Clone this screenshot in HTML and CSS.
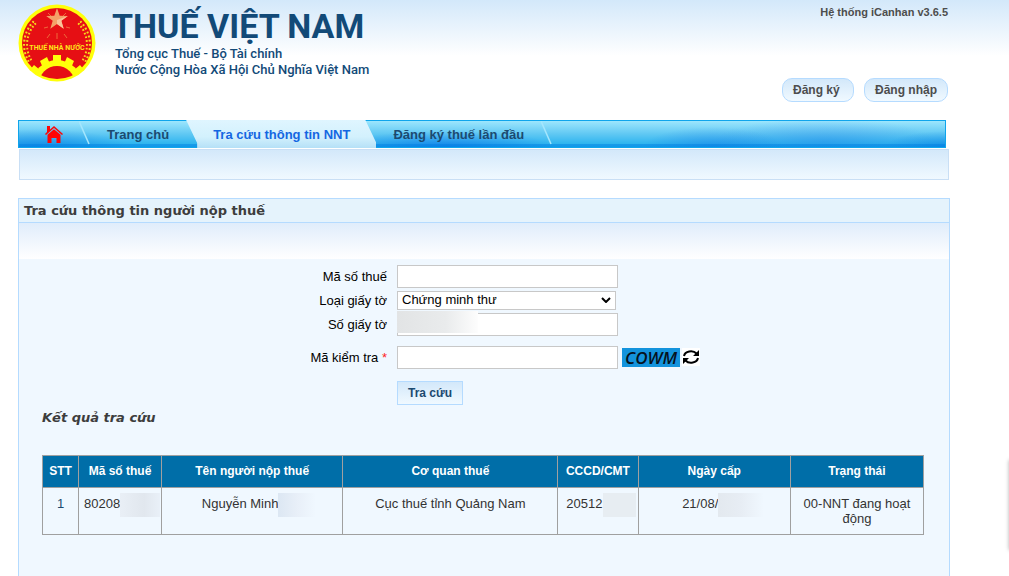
FILE: index.html
```html
<!DOCTYPE html>
<html lang="vi">
<head>
<meta charset="utf-8">
<title>Thuế Việt Nam</title>
<link rel="stylesheet" href="styles.css">
</head>
<body>
<header class="header">
  <a class="brand" href="#">
    <svg class="emblem" viewBox="0 0 78 78" aria-label="Thuế Nhà Nước">
      <circle cx="39" cy="39" r="38.5" fill="#ffff0a"/>
      <circle cx="39" cy="39" r="35" fill="#e60f14"/>
      <clipPath id="disc"><circle cx="39" cy="39" r="36"/></clipPath>
      <g clip-path="url(#disc)">
        <circle cx="39" cy="81" r="25" fill="#ffff0a"/>
        <path d="M35 51h8v8h-8zM22 57l7-4 3 7-7 4zM56 57l-7-4-3 7 7 4zM11 67l5-6 6 5-5 6zM67 67l-5-6-6 5 5 6z" fill="#ffff0a"/>
        <circle cx="39" cy="80" r="18" fill="#e60f14"/>
      </g>
      <path d="M12 57A32 32 0 0 1 17 18M66 57A32 32 0 0 0 61 18" fill="none" stroke="#f6dc1c" stroke-width="5" stroke-dasharray="1.800 2.200"/>
      <path d="M12 57A32 32 0 0 1 17 18M66 57A32 32 0 0 0 61 18" fill="none" stroke="#e60f14" stroke-width="1"/>
      <path d="M26 24l4-1M52 24l-4-1M32 30l-3 4M46 30l3 4M39 29v6M30 9l3 3M48 9l-3 3" stroke="#ee6a3a" stroke-width="1"/>
      <path d="M39 4l2.700 7.800 8.100.1-6.500 4.900 2.400 7.900L39 20l-6.700 4.700 2.400-7.900-6.500-4.900 8.100-.1z" fill="#f4a168"/>
      <path d="M39 4v12l4.300.8 2.400 7.900L39 20zM39 16l10.800-4.100-6.500 4.900z" fill="#fac39a"/>
      <text class="emblem-text" x="39" y="46" text-anchor="middle">THUẾ NHÀ NƯỚC</text>
    </svg>
    <span class="brand-text">
      <span class="brand-name">THUẾ VIỆT NAM</span>
      <span class="brand-line">Tổng cục Thuế - Bộ Tài chính</span>
      <span class="brand-line">Nước Cộng Hòa Xã Hội Chủ Nghĩa Việt Nam</span>
    </span>
  </a>
  <div class="account">
    <span class="version">Hệ thống iCanhan v3.6.5</span>
    <div class="account-buttons">
      <button class="pill" type="button">Đăng ký</button>
      <button class="pill" type="button">Đăng nhập</button>
    </div>
  </div>
</header>

<nav class="nav">
  <a class="nav-home" href="#" aria-label="Trang chủ">
    <svg class="home-icon" viewBox="0 0 18 18"><path d="M2 1h3v3.500L9 1l9 8-1 1L9 3 1 10 0 9l2-2zM9 4.200l6.500 5.600V18h-4v-5h-5v5h-4V9.800z" fill="#fe0505"/></svg>
  </a>
  <svg class="nav-sep" viewBox="0 0 11 26"><path d="M0 0l10 23" stroke="#a5e6fd" stroke-width="1.500"/></svg>
  <a class="nav-link" href="#">Trang chủ</a>
  <a class="nav-link nav-link-active" href="#">Tra cứu thông tin NNT</a>
  <a class="nav-link" href="#">Đăng ký thuế lần đầu</a>
  <svg class="nav-sep" viewBox="0 0 11 26"><path d="M0 0l10 23" stroke="#a5e6fd" stroke-width="1.500"/></svg>
</nav>
<div class="subnav"></div>

<main class="panel">
  <h1 class="panel-title">Tra cứu thông tin người nộp thuế</h1>
  <div class="panel-band"></div>
  <form class="form">
    <div class="row">
      <label for="tax-code">Mã số thuế</label>
      <input class="field" id="tax-code" type="text">
    </div>
    <div class="row">
      <label for="doc-type">Loại giấy tờ</label>
      <div class="control">
        <select class="select" id="doc-type"><option>Chứng minh thư</option></select>
        <svg class="chevron" viewBox="0 0 10 6"><path d="M1 1l4 4 4-4" fill="none" stroke="#000" stroke-width="2"/></svg>
      </div>
    </div>
    <div class="row">
      <label for="doc-number">Số giấy tờ</label>
      <div class="control">
        <input class="field" id="doc-number" type="text">
        <span class="field-mask"></span>
      </div>
    </div>
    <div class="row row-captcha">
      <label for="captcha">Mã kiểm tra <span class="required">*</span></label>
      <div class="control">
        <input class="field" id="captcha" type="text">
        <span class="captcha">COWM</span>
        <button class="refresh" type="button" aria-label="Đổi mã">
          <svg class="refresh-icon" viewBox="0 0 18 18"><path d="M2 8a7 5.500 0 0 1 12.500-2.500M16 10a7 5.500 0 0 1-12.500 2.500" fill="none" stroke="#000" stroke-width="2"/><path d="M17 2v6h-6zM1 16v-6h6z"/></svg>
        </button>
      </div>
    </div>
    <div class="row row-submit">
      <span></span>
      <button class="submit" type="button">Tra cứu</button>
    </div>
  </form>

  <section class="results">
    <h2 class="results-title">Kết quả tra cứu</h2>
    <table class="table">
      <colgroup>
        <col class="col-index"><col class="col-code"><col class="col-name"><col class="col-office"><col class="col-id"><col class="col-date"><col class="col-status">
      </colgroup>
      <thead>
        <tr><th>STT</th><th>Mã số thuế</th><th>Tên người nộp thuế</th><th>Cơ quan thuế</th><th>CCCD/CMT</th><th>Ngày cấp</th><th>Trạng thái</th></tr>
      </thead>
      <tbody>
        <tr>
          <td class="index">1</td>
          <td class="start">80208<span class="mask mask-code"></span></td>
          <td>Nguyễn Minh<span class="mask mask-name"></span></td>
          <td>Cục thuế tỉnh Quảng Nam</td>
          <td>20512<span class="mask mask-id"></span></td>
          <td>21/08/<span class="mask mask-date"></span></td>
          <td>00-NNT đang hoạt động</td>
        </tr>
      </tbody>
    </table>
  </section>
</main>
<aside class="side-tab"></aside>
</body>
</html>
```

FILE: styles.css
```css
* { box-sizing: border-box; }

body {
  margin: 0;
  min-height: 100vh;
  padding: 0 59px 0 18px;
  display: flex;
  flex-direction: column;
  font: 13px/16px "Liberation Sans", Arial, sans-serif;
  color: #333;
  background: #fff linear-gradient(#d3e8fa, #fff) no-repeat top / 100% 56px;
}

button, input, select { font: inherit; margin: 0; }

.header {
  display: flex;
  justify-content: space-between;
  height: 120px;
  padding: 4px 2px 0 0;
}

.brand {
  display: flex;
  align-items: flex-start;
  gap: 16px;
  color: #124a78;
  text-decoration: none;
}

.emblem { width: 78px; height: 78px; }

.emblem-text {
  font: bold 7px Roboto, sans-serif;
  fill: #ffe619;
}

.brand-text {
  display: flex;
  flex-direction: column;
  font-family: Roboto, sans-serif;
}

.brand-name {
  padding-top: 2px;
  font-size: 34px;
  line-height: 40px;
  font-weight: 700;
}

.brand-line {
  padding-left: 3px;
  font-size: 13px;
  line-height: 16px;
  font-weight: 500;
}

.account {
  display: flex;
  flex-direction: column;
  align-items: flex-end;
  gap: 58px;
}

.version { font-size: 11px; line-height: 16px; font-weight: 700; color: #4d4d4d; }

.account-buttons { display: flex; gap: 10px; }

.pill {
  min-width: 72px;
  height: 24px;
  padding: 0 10px;
  border: 1px solid #b5dbff;
  border-radius: 10px;
  background: linear-gradient(#d3e8fa, #f0f9ff);
  font-size: 12px;
  font-weight: 700;
  text-align: left;
  color: #4d4d4d;
}

.nav {
  display: flex;
  height: 28px;
  margin-right: 4px;
  border: 1px solid #0fa5ec;
  background:
    linear-gradient(transparent 23px, rgba(0, 125, 225, .45) 23px),
    radial-gradient(ellipse 70px 20px at 75% 100%, rgba(20, 115, 230, .45), transparent),
    radial-gradient(ellipse 110px 24px at 87% 80%, rgba(30, 120, 230, .35), transparent),
    radial-gradient(ellipse 110px 16px at 46% 100%, rgba(0, 90, 230, .5), transparent),
    radial-gradient(ellipse 90px 18px at 2% 100%, rgba(0, 105, 225, .5), transparent),
    radial-gradient(ellipse 60px 16px at 100% 100%, rgba(0, 110, 225, .5), transparent),
    linear-gradient(#9de6fd, #60c8f3 50%, #1eaeee);
}

.nav-home {
  display: flex;
  align-items: center;
  padding: 0 16px 0 26px;
}

.home-icon { width: 18px; height: 18px; }
.nav-sep { width: 11px; height: 26px; }

.nav-link {
  display: flex;
  align-items: center;
  padding: 2px 17px 0;
  font-weight: 700;
  color: #1c4a70;
  text-decoration: none;
}

.nav-link-active {
  margin: -1px 0;
  padding: 2px 26px 0 27px;
  color: #1467e2;
  background: linear-gradient(#dff5ff, #d3f1fd 60%, #b5e0f7);
  clip-path: polygon(0 0, calc(100% - 11px) 0, 100% 23px, 100% 100%, 11px 100%, 11px 23px);
}

.subnav {
  height: 31px;
  margin: 1px 1px 0 1px;
  border: 1px solid #c9dff5;
  background: linear-gradient(#d3e8fa, #f0f9ff);
}

.panel {
  flex: 1;
  margin-top: 18px;
  border: 1px solid #b5dbff;
  border-bottom: 0;
  background: #f0f8ff;
}

.panel-title {
  margin: 0;
  padding: 4px 5px 3px;
  border-bottom: 1px solid #b5dbff;
  background: #e5f3fc;
  font: bold 13px/16px "DejaVu Sans", Verdana, sans-serif;
  color: #3d3d3d;
}

.panel-band { height: 36px; background: linear-gradient(#e0edfb, #fff); }

.form { padding-top: 5px; color: #000; }

.row {
  display: grid;
  grid-template-columns: 2fr 3fr;
  column-gap: 10px;
  align-items: center;
  min-height: 24px;
}

.row label { padding-top: 2px; text-align: right; }
.row-captcha { margin-top: 9px; }
.row-submit { margin-top: 12px; }
.required { color: #f22; }

.control {
  position: relative;
  display: flex;
  align-items: center;
}

.field {
  width: 221px;
  height: 23px;
  padding: 1px 4px;
  border: 1px solid #c8c8c8;
  background: #fff;
}

.select {
  appearance: none;
  width: 219px;
  height: 19px;
  padding: 0 4px;
  border: 1px solid #c8c8c8;
  border-radius: 0;
  background: #fff;
  color: #000;
}

.chevron {
  position: absolute;
  left: 204px;
  width: 10px;
  height: 6px;
  pointer-events: none;
}

.field-mask {
  position: absolute;
  left: 0;
  top: -2px;
  width: 81px;
  height: 22px;
  background: linear-gradient(90deg, #e2e4e5, #e9ebec 60%, #fdfdfd);
}

.captcha {
  width: 58px;
  height: 19px;
  margin-left: 4px;
  text-align: center;
  background: #1393dc;
  color: #06121d;
  font: italic 600 17px/19px "Open Sans", sans-serif;
}

.refresh {
  display: flex;
  margin-left: 2px;
  padding: 0;
  border: 0;
  background: #fff;
}

.refresh-icon { width: 18px; height: 18px; }

.submit {
  justify-self: start;
  height: 24px;
  padding: 0 10px;
  border: 1px solid #b5dbff;
  background: linear-gradient(#d3e8fa, #f0f9ff);
  font-size: 12px;
  font-weight: 700;
  color: #1c4a70;
}

.results { padding: 5px 25px 24px 23px; }

.results-title {
  margin: 0 0 29px;
  font: italic bold 13px/16px "DejaVu Sans", Verdana, sans-serif;
  color: #3d3d3d;
}

.table {
  width: 100%;
  table-layout: fixed;
  border-collapse: collapse;
  line-height: 15px;
  text-align: center;
}

.table th, .table td { border: 1px solid #a0a0a0; }

.table th {
  height: 32px;
  padding: 0;
  background: #006ea8;
  font-size: 12px;
  font-weight: 700;
  color: #fff;
}

.table td { padding: 8px 5px; vertical-align: top; }
.table .start { text-align: left; white-space: nowrap; }
.table .index { color: #1c4a70; }

.col-index { width: 4.1%; }
.col-code { width: 9.4%; }
.col-name { width: 20.6%; }
.col-office { width: 24.4%; }
.col-id { width: 9.1%; }
.col-date { width: 17.3%; }
.col-status { width: 15.1%; }

.mask {
  display: inline-block;
  height: 24px;
  margin: -6px 0;
  vertical-align: middle;
}

.mask-code { width: 40px; margin-right: -6px; background: linear-gradient(90deg, #e9eff6, #e1e7ee 60%, #e9f0f8); }
.mask-name { width: 38px; margin-right: -14px; background: linear-gradient(90deg, #dce7f3, #e8eff8 50%, #f0f8ff); }
.mask-id { width: 33px; margin-right: -6px; background: #e7edf2; }
.mask-date { width: 46px; margin-right: -18px; background: linear-gradient(90deg, #e3e9ef, #e7edf4 50%, #f0f8ff); }

/* Collapsed drawer waiting at the window's right edge */
.side-tab {
  position: fixed;
  left: 100%;
  top: 460px;
  width: 20px;
  height: 90px;
  box-shadow: 0 0 4px rgba(0, 0, 0, .3);
}
```
